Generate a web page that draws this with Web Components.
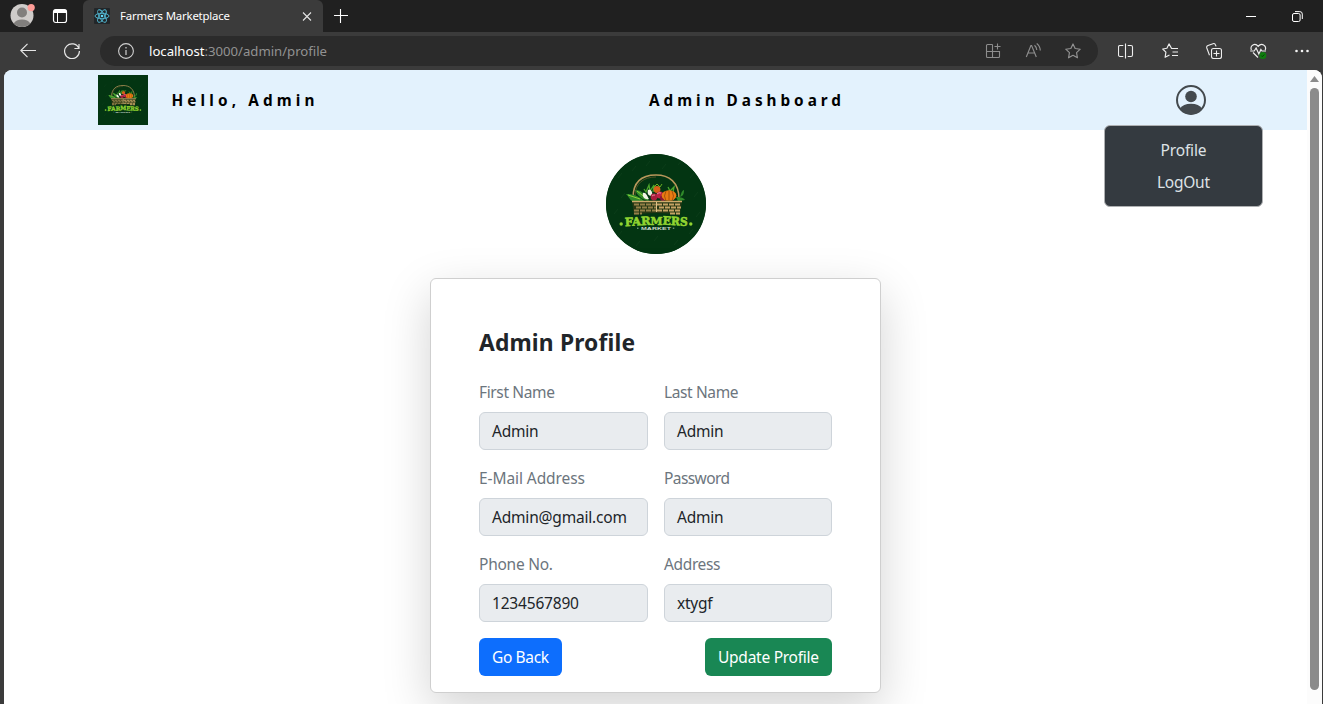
<!DOCTYPE html>
<html lang="en">
<head>
<meta charset="utf-8">
<title>Farmers Marketplace</title>
<style>
html,body{margin:0;height:100%;overflow:hidden;background:#3b3b3b;font-family:"Noto Sans","Open Sans",sans-serif}
</style>
</head>
<body>
<app-window></app-window>
<script>
const define = (name, html, after) => customElements.define(name, class extends HTMLElement {
  connectedCallback() {
    if (this.shadowRoot) return;
    const t = document.createElement('template');
    t.innerHTML = typeof html === 'function' ? html(this) : html;
    this.attachShadow({mode: 'open'}).append(t.content.cloneNode(true));
    if (after) after(this);
  }
});

/* A run of text whose tracking is set so that it takes the given width. */
define('fit-text', '<style>:host{display:inline-block;white-space:pre;line-height:inherit}span{display:inline-block}</style><span><slot></slot></span>', el => {
  const w = +el.getAttribute('w'), s = el.shadowRoot.querySelector('span');
  const n = el.textContent.length;
  const gap = (w - s.getBoundingClientRect().width) / (n - 1);
  s.style.letterSpacing = gap + 'px';
  s.style.marginRight = -gap + 'px';
});

define('market-logo', `<style>:host{display:block;flex:none;overflow:hidden;background:#04350f}svg{display:block;width:100%;height:100%}</style>
<svg viewBox="0 0 100 100">
<rect width="100" height="100" fill="#033512"/>
<g stroke="#174623" stroke-width=".5"><path d="M12 24l4-5M26 17l4-5M40 12l4-5M56 15l4-5M72 11l4-5M84 24l4-5M15 44l4-5M88 43l4-5M12 82l4-5M30 92l4-5M48 87l4-5M68 91l4-5M83 80l4-5M8 60l4-5M90 63l4-5"/></g>
<path d="M27 44C27 27 37 21 50 21S73 28 73 45" fill="none" stroke="#b9975b" stroke-width="1.5"/>
<path d="M29 42C29 29 38 23 50 23" fill="none" stroke="#6e5a2d" stroke-width=".7"/>
<path d="M20 40c6 0 12 1 18 7H26c-2-1-3-4-6-7zM29 36c5 0 10 3 14 11-7-1-12-6-14-11zM70 43c3 0 7 0 9 3l-7 1zM75 40c1-3 2-4 3-4 0 4-1 6-4 7z" fill="#2f8a2a"/>
<path d="M22 41l12 4M31 37l10 8" stroke="#8fcf38" stroke-width="1"/>
<path d="M38 35l2 3 3-7 1 6 4-6-1 7M62 33l2 4 4-4-1 5" stroke="#4ca72c" stroke-width="1.3" fill="none"/>
<circle cx="51" cy="35.5" r="3.4" fill="#d5601a"/>
<path d="M48 33l3-3 3 3 2-3" stroke="#6aaf22" fill="none"/>
<path d="M37 39c3-1 4 3 6 6-4 1-7-2-6-6zM42 36c3-1 5 2 4 6-4 0-5-3-4-6z" fill="#f0f4e7"/>
<circle cx="48" cy="43" r="3.4" fill="#a71d3e"/><circle cx="54" cy="41" r="3.6" fill="#bd2145"/><circle cx="57" cy="44" r="3" fill="#8d1735"/>
<path d="M51 40q2-2 4-1M46 42q1-1 3-1" stroke="#f6a3b1" stroke-width=".8" fill="none"/>
<ellipse cx="63" cy="41.5" rx="7.4" ry="5.2" fill="#e87b12"/><path d="M60 37q-3 5 0 10M63 37v10M66 37q3 5 0 10" stroke="#95460a" stroke-width=".8" fill="none"/>
<path d="M26 47H76L74 61Q50 57 28 61z" fill="#283815"/>
<path d="M26 47.5H76" stroke="#cfac6d" stroke-width="1.6"/>
<g stroke="#c5a365" stroke-width="2" stroke-dasharray="5 1"><path d="M28 50.6H50M30 53.6H50M28 56.6H50M28 59.4H36" stroke="#948048"/><path d="M51 50.6H75M53 53.6H75M51 56.6H74M64 59.4H74"/></g>
<path d="M50.5 48v10" stroke="#ddc18a"/>
<g fill="#91d431" font-family="DejaVu Serif,serif" font-weight="700" font-size="11.5" stroke="#91d431" stroke-width=".6">
<text transform="rotate(-3 35 70)" x="18.8" y="71.3" textLength="26" lengthAdjust="spacingAndGlyphs">FAR</text><text x="44.5" y="70.5" textLength="12" lengthAdjust="spacingAndGlyphs">M</text><text transform="rotate(3 65 70)" x="56.5" y="71" textLength="25" lengthAdjust="spacingAndGlyphs">ERS</text></g>
<circle cx="15.2" cy="70" r="1.7" fill="#91d431"/><circle cx="84.8" cy="70" r="1.7" fill="#91d431"/>
<text x="35" y="75.8" font-family="Liberation Sans,sans-serif" font-weight="700" font-size="4.4" fill="#c8d7c9" textLength="30" lengthAdjust="spacingAndGlyphs">MARKET</text>
<path d="M31 74.2h1.5M66.8 74.2h1.5" stroke="#c8d7c9" stroke-width=".8"/>
</svg>`);

const icons = {
  avatar: ['0 0 26 24', '<circle cx="12" cy="12.5" r="11.5" fill="#cfccca"/><circle cx="12" cy="9.5" r="5" fill="#817f7d"/><path d="M3.7 20.5Q6 16.5 12 16.5t8.3 4A11.5 11.5 0 0 1 12 24a11.5 11.5 0 0 1-8.3-3.5z" fill="#817f7d"/><circle cx="21.2" cy="4.6" r="3.6" fill="#ff9d98"/>'],
  workspace: ['0 0 16 16', '<rect x="1.5" y="1.5" width="13" height="13" rx="2.2" fill="none" stroke="#fff" stroke-width="1.2"/><path d="M1.5 5V3.5a2 2 0 0 1 2-2h9a2 2 0 0 1 2 2V5z" fill="#fff"/><path d="M5.5 5v9.5" stroke="#fff"/>'],
  react: ['0 0 16 16', '<rect width="16" height="16" rx="1" fill="#222629"/><g fill="none" stroke="#54bdd8" stroke-width=".9"><ellipse cx="8" cy="8" rx="7" ry="2.7"/><ellipse cx="8" cy="8" rx="7" ry="2.7" transform="rotate(60 8 8)"/><ellipse cx="8" cy="8" rx="7" ry="2.7" transform="rotate(120 8 8)"/></g><circle cx="8" cy="8" r="1.3" fill="#61dafb"/>'],
  close: ['0 0 10 10', '<path d="M1 1.5l8 8M9 1.5l-8 8" stroke="#e5e5e5" stroke-width="1.1"/>'],
  plus: ['0 0 14 14', '<path d="M6.5 0v14M0 6.5h14" stroke="#fff" stroke-width="1.1"/>'],
  min: ['0 0 10 10', '<path d="M0 5.5h10" stroke="#fff"/>'],
  restore: ['0 0 11 11', '<rect x=".5" y="2.5" width="7.6" height="8" rx="1.5" fill="none" stroke="#fff"/><path d="M3 .6h4.8a2.5 2.5 0 0 1 2.5 2.5V8" fill="none" stroke="#fff"/>'],
  back: ['0 0 16 16', '<path d="M7.5 .8L.8 7.5l6.7 6.7M.8 7.5H16" fill="none" stroke="#e6e6e6" stroke-width="1.15"/>'],
  reload: ['0 0 16 16', '<path d="M14.8 5.3A7.4 7.4 0 1 0 15.4 8M15 1v4.5h-4.6" fill="none" stroke="#e6e6e6" stroke-width="1.2"/>'],
  info: ['0 0 16 16', '<circle cx="8" cy="8" r="7.4" fill="none" stroke="#d0d0d0" stroke-width="1.1"/><path d="M8 7v5M8 4v1.5" stroke="#d0d0d0" stroke-width="1.2"/>'],
  apps: ['0 0 16 16', '<path d="M7.5 1.5H2.5a1 1 0 0 0-1 1v11a1 1 0 0 0 1 1h11a1 1 0 0 0 1-1V8.5h-13M7.5 1.5v13M12.5 .5v6M9.5 3.5h6" fill="none" stroke="#8d8d8d" stroke-width="1.1"/>'],
  read: ['0 0 16 16', '<path d="M1.3 14L5.9 2.5h.7L11.3 14M3 10h7M9.5 2.2q2.1 1.8 2.3 4.8M11.7.5q3.4 2.5 3.6 7" fill="none" stroke="#8d8d8d" stroke-width="1.15"/>'],
  star: ['0 0 16 16', '<path d="M8 .9l2.15 4.6 5.1.7-3.7 3.5.9 5.1L8 12.3l-4.45 2.5.9-5.1L.75 6.2l5.1-.7z" fill="none" stroke="#929292" stroke-width="1.15" stroke-linejoin="round"/>'],
  split: ['0 0 16 16', '<path d="M5.3 2.5H2A1.5 1.5 0 0 0 .5 4v8A1.5 1.5 0 0 0 2 13.5h3.3M9.7 2.5H13A1.5 1.5 0 0 1 14.500 4v8a1.5 1.5 0 0 1-1.500 1.5H9.700M7.5 .5v15" fill="none" stroke="#eee" stroke-width="1.1"/>'],
  favs: ['0 0 16 16', '<path d="M9.600 5.500L7 .9 4.900 5.300.7 6l3.200 3.200-.8 5.100L7.500 12M7 .9l2.600 4.600H16M10.500 9H16M10 12.500h6" fill="none" stroke="#eee" stroke-width="1.15" stroke-linejoin="round"/>'],
  collect: ['0 0 16 16', '<rect x="5.500" y="5.500" width="10" height="10" rx="2" fill="none" stroke="#eee" stroke-width="1.1"/><path d="M10.500 7.500v6M7.500 10.500h6M3.500 12.200L.8 5a2 2 0 0 1 1.200-2.500l5-1.800A2 2 0 0 1 9.500 2l.6 1.400" fill="none" stroke="#eee" stroke-width="1.1"/>'],
  heart: ['0 0 17 16', '<path d="M1.400 7C-.4 2.500 5-.8 8.200 3.400 11.500-.8 17 2.500 15.200 7M3 9.500l5 5M.2 8h4l1.900-3 2.800 6 2-4.500L12 8h4" fill="none" stroke="#eee" stroke-width="1.15"/><circle cx="12.800" cy="12.500" r="3.500" fill="#107c10"/><path d="M11.300 12.600l1 1 2-2" stroke="#063d06" fill="none"/>'],
  more: ['0 0 14 14', '<g fill="#f5f5f5"><circle cx="1.500" cy="7" r="1.300"/><circle cx="7" cy="7" r="1.300"/><circle cx="12.500" cy="7" r="1.300"/></g>'],
  user: ['0 0 30 30', '<circle cx="15" cy="15" r="14" fill="none" stroke="#444a4e" stroke-width="2"/><circle cx="15" cy="11.500" r="5.800" fill="#444a4e"/><path d="M4 23.500Q7 18.700 15 18.700t11 4.800A14 14 0 0 1 15 29.500 14 14 0 0 1 4 23.500z" fill="#444a4e"/>']
};
define('ui-icon', el => {
  const [vb, body] = icons[el.getAttribute('name')], [, , w, h] = vb.split(' ');
  return `<style>:host{display:block;flex:none}svg{display:block}</style><svg width="${w}" height="${h}" viewBox="${vb}">${body}</svg>`;
});

define('tab-strip', `<style>
:host{display:flex;height:32px;background:#202020;align-items:center;box-sizing:border-box;color:#fff;font-size:11.4px}
.ws{margin:0 0 0 16px}
.tab{display:flex;align-items:center;width:240px;height:32px;margin-left:15px;background:#3b3b3b;border-radius:6px 6px 0 0;box-sizing:border-box;padding:0 11px}
fit-text{margin:-2px 0 0 10px;flex:none}
.x{margin-left:auto}.plus{margin-left:11px}.min{margin-left:auto}.res{margin:0 20px 0 36px}
.av{margin:-2px 0 0 10px}
</style>
<ui-icon class="av" name="avatar"></ui-icon><ui-icon class="ws" name="workspace"></ui-icon>
<div class="tab"><ui-icon name="react"></ui-icon><fit-text w="110">Farmers Marketplace</fit-text><ui-icon class="x" name="close"></ui-icon></div>
<ui-icon class="plus" name="plus"></ui-icon><ui-icon class="min" name="min"></ui-icon><ui-icon class="res" name="restore"></ui-icon>`);

define('tool-bar', `<style>
:host{display:flex;height:38px;background:#3b3b3b;align-items:center;box-sizing:border-box;padding:0 14px 0 20px;font-size:13.2px}
.re{margin-left:28px}
.bar{display:flex;align-items:center;width:998px;height:30px;border-radius:15px;background:#2b2b2b;margin-left:20px;box-sizing:border-box;padding:0 17px 0 18px;color:#929292}
.url{margin:0 auto 0 15px;white-space:nowrap;line-height:28px}.url b{font-weight:400;color:#fff}
.in{display:flex;gap:24px}.out{display:flex;align-items:center;margin-left:20px;gap:28px;flex:none}
</style>
<ui-icon name="back"></ui-icon><ui-icon class="re" name="reload"></ui-icon>
<div class="bar"><ui-icon name="info"></ui-icon><div class="url"><b><fit-text w="55.5">localhost</fit-text></b><fit-text w="122.5">:3000/admin/profile</fit-text></div>
<div class="in"><ui-icon name="apps"></ui-icon><ui-icon name="read"></ui-icon><ui-icon name="star"></ui-icon></div></div>
<div class="out"><ui-icon name="split"></ui-icon><ui-icon name="favs"></ui-icon><ui-icon name="collect"></ui-icon><ui-icon name="heart"></ui-icon><ui-icon name="more"></ui-icon></div>`);

define('drop-menu', `<style>
:host{display:block;box-sizing:border-box;width:159px;height:82px;background:#343a40;border:1px solid #aeb0b2;border-radius:6px;padding:8px 0;color:#dee2e6;font-size:15.5px;line-height:32px;text-align:center}
div{height:32px}
</style><div><fit-text w="46">Profile</fit-text></div><div><fit-text w="53">LogOut</fit-text></div>`);

define('nav-bar', `<style>
:host{display:flex;position:relative;height:60px;background:#e3f2fd;align-items:center;box-sizing:border-box;padding:0 101px 0 94px;color:#000;font-weight:700;font-size:15.3px}
market-logo{width:50px;height:50px}
.hi{width:477.500px;margin-left:23.500px}.acct{margin-left:auto}
drop-menu{position:absolute;right:44px;top:55px;font-weight:400}
</style><market-logo></market-logo><div class="hi"><fit-text w="143">Hello, Admin</fit-text></div><fit-text w="192">Admin Dashboard</fit-text>
<ui-icon class="acct" name="user"></ui-icon><drop-menu></drop-menu>`);

define('form-field', el => `<style>
:host{display:block;font-size:15.5px;line-height:24px}
.l{color:#6c757d;margin-bottom:8px;height:24px}
.v{height:38px;box-sizing:border-box;border:1px solid #ced4da;border-radius:6px;background:#e9ecef;padding:6px 12px;color:#212529}
</style><div class="l"><fit-text w="${el.getAttribute('lw')}">${el.getAttribute('label')}</fit-text></div><div class="v"><fit-text w="${el.getAttribute('vw')}">${el.getAttribute('value')}</fit-text></div>`);

define('ui-button', `<style>:host{display:block;height:38px;box-sizing:border-box;padding:7px 13px;border-radius:6px;color:#fff;font-size:15.5px;line-height:24px;background:var(--bg)}</style><slot></slot>`);

define('profile-card', `<style>
:host{display:block;box-sizing:border-box;width:451px;height:415px;border:1px solid #cfcfcf;border-radius:6px;background:#fff;padding:48px 48px 16px;box-shadow:0 16px 48px rgba(0,0,0,.175)}
h2{margin:0 0 21px;height:32px;line-height:32px;font-size:22.8px;color:#212529}
.g{display:grid;grid-template-columns:169px 168px;column-gap:16px;row-gap:16px}
.b{display:flex;justify-content:space-between;margin-top:16px}
</style><h2><fit-text w="156">Admin Profile</fit-text></h2>
<div class="g">
<form-field label="First Name" lw="76" value="Admin" vw="46.5"></form-field>
<form-field label="Last Name" lw="74.5" value="Admin" vw="46.5"></form-field>
<form-field label="E-Mail Address" lw="106" value="Admin@gmail.com" vw="135"></form-field>
<form-field label="Password" lw="66" value="Admin" vw="46.5"></form-field>
<form-field label="Phone No." lw="74" value="1234567890" vw="87"></form-field>
<form-field label="Address" lw="56.5" value="xtygf" vw="35.5"></form-field>
</div>
<div class="b"><ui-button style="--bg:#0d6efd"><fit-text w="57">Go Back</fit-text></ui-button><ui-button style="--bg:#198754"><fit-text w="101">Update Profile</fit-text></ui-button></div>`);

define('scroll-bar', `<style>
:host{display:flex;flex-direction:column;align-items:center;width:15px;flex:none;background:#fcfcfc;box-sizing:border-box;padding-top:6px}
svg{display:block;margin-bottom:6px}.t{width:9px;height:602px;border-radius:5px;background:#8b8b8b}
</style><svg width="9" height="6"><path d="M0 6L4.500 0 9 6z" fill="#8b8b8b"/></svg><div class="t"></div>`);

define('app-window', `<style>
:host{display:block;width:1323px;height:704px;overflow:hidden;background:#3b3b3b}
.page{display:flex;margin:0 1px 0 4px;height:634px;background:#fff;border-radius:8px 8px 0 0;overflow:hidden}
main{flex:1;min-width:0;overflow:hidden}
.c{display:flex;flex-direction:column;align-items:center;padding-top:24px}
.c market-logo{width:100px;height:100px;border-radius:50%;margin-bottom:24px}
</style><tab-strip></tab-strip><tool-bar></tool-bar>
<div class="page"><main><nav-bar></nav-bar><div class="c"><market-logo></market-logo><profile-card></profile-card></div></main><scroll-bar></scroll-bar></div>`);
</script>
</body>
</html>
